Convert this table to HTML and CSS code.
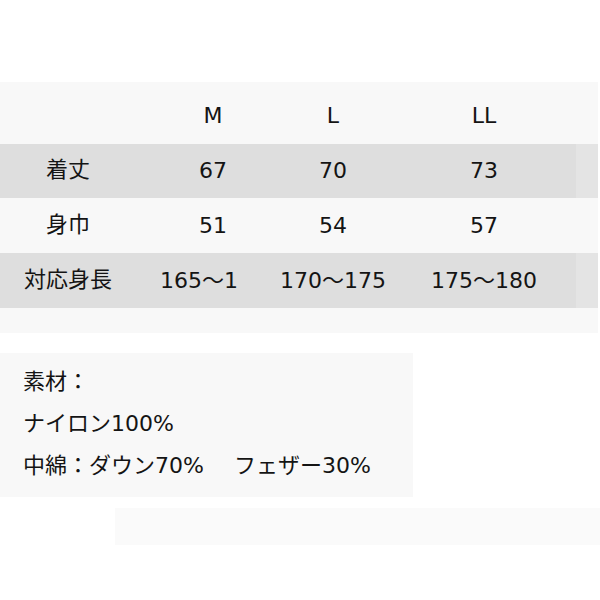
FILE: index.html
```html
<!DOCTYPE html>
<html lang="ja">
<head>
<meta charset="utf-8">
<title>サイズ表</title>
<link rel="stylesheet" href="styles.css">
</head>
<body>
<main class="page">
  <section class="size-table">
    <div class="row head">
      <div class="cell label"></div>
      <div class="cell">M</div>
      <div class="cell">L</div>
      <div class="cell">LL</div>
    </div>
    <div class="row shade">
      <div class="cell label">着丈</div>
      <div class="cell">67</div>
      <div class="cell">70</div>
      <div class="cell">73</div>
    </div>
    <div class="row">
      <div class="cell label">身巾</div>
      <div class="cell">51</div>
      <div class="cell">54</div>
      <div class="cell">57</div>
    </div>
    <div class="row shade">
      <div class="cell label">対応身長</div>
      <div class="cell cut">165～1</div>
      <div class="cell">170～175</div>
      <div class="cell">175～180</div>
    </div>
  </section>
  <section class="material">
    <p class="line">素材：</p>
    <p class="line">ナイロン100%</p>
    <p class="line">中綿：ダウン70%<span class="gap"></span>フェザー30%</p>
  </section>
  <div class="blank-box"></div>
</main>
</body>
</html>
```
FILE: styles.css
```css
html, body {
  margin: 0;
  padding: 0;
  background: #ffffff;
}

body {
  font-family: "DejaVu Sans", "Noto Sans CJK JP", sans-serif;
  font-size: 22px;
  color: #141414;
}

.page {
  width: 600px;
  height: 600px;
  overflow: hidden;
}

.size-table {
  margin-top: 82px;
  width: 598px;
  background: #f8f8f8;
  padding-bottom: 25px;
}

.row {
  display: grid;
  grid-template-columns: 136px 154px 86px 216px;
  height: 55px;
  align-items: center;
}

.row.head {
  height: 56px;
  padding-top: 6px;
}

.row.shade:nth-child(2) {
  height: 54px;
}

.row.shade {
  background: linear-gradient(to right, #dedede 0, #dedede 576px, #e4e4e4 576px, #e4e4e4 598px);
}

.cell {
  display: flex;
  justify-content: center;
  white-space: nowrap;
  line-height: 22px;
}

.cell.label {
  padding-bottom: 2px;
}

.cell.cut {
  justify-content: flex-start;
  padding-left: 24px;
}

.material {
  margin-top: 20px;
  width: 413px;
  height: 144px;
  box-sizing: border-box;
  padding: 8px 0 0 23px;
  background: #f8f8f8;
}

.line {
  margin: 0;
  line-height: 42px;
  white-space: nowrap;
}

.gap {
  display: inline-block;
  width: 30px;
}

.blank-box {
  margin-top: 11px;
  margin-left: 115px;
  width: 485px;
  height: 37px;
  background: #fafafa;
}
```
